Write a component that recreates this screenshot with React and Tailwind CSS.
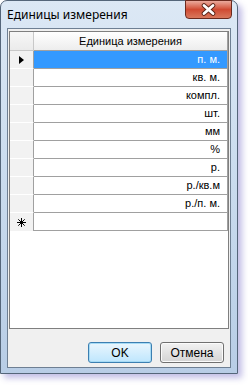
const units = ["п. м.", "кв. м.", "компл.", "шт.", "мм", "%", "р.", "р./кв.м", "р./п. м."];

const CloseX = () => (
  <svg width="15" height="13" viewBox="0 0 15 13">
    <path d="M3 2.5 L12 10.5 M12 2.5 L3 10.5" stroke="#5a2418" strokeWidth="4.6" strokeLinecap="round" />
    <path d="M3 2.5 L12 10.5 M12 2.5 L3 10.5" stroke="#ffffff" strokeWidth="2.8" strokeLinecap="round" />
  </svg>
);

const Star = () => (
  <svg width="9" height="9" viewBox="0 0 9 9">
    <path d="M4.5 0 V9 M0 4.5 H9 M1.3 1.3 L7.7 7.7 M7.7 1.3 L1.3 7.7" stroke="#000" strokeWidth="1" />
  </svg>
);

const Row = ({ label, selected }) => (
  <div className="flex h-[18px]">
    <div className="w-[24px] shrink-0 bg-[#f2f2f2] border-r border-[#a0a0a0] border-b border-b-white flex items-center justify-center">
      {selected && (
        <svg width="5" height="8" viewBox="0 0 5 8">
          <path d="M0 0 L5 4 L0 8 Z" fill="#000" />
        </svg>
      )}
    </div>
    <div
      className={`flex-1 flex items-center justify-end pr-[7px] border-b border-r border-[#a0a0a0] ${
        selected ? "bg-[#3399ff] text-white" : "bg-white text-black"
      }`}
    >
      {label}
    </div>
  </div>
);

const App = () => {
  return (
    <div className="w-[248px] h-[385px] bg-white" style={{ fontFamily: "'Liberation Sans', Arial, sans-serif" }}>
      <div className="relative w-[238px] h-[374px] rounded-t-[7px] border border-[#55667a] bg-gradient-to-b from-[#dce8f5] via-[#c9dbee] to-[#b8cde6] shadow-[4px_4px_6px_rgba(120,110,200,0.45)]">
        <div className="h-[27px] flex items-center pl-[6px] text-[12px] text-black" style={{ fontFamily: "'Noto Sans', 'Open Sans', sans-serif" }}>
          Единицы измерения
        </div>
        <div className="absolute top-[-1px] right-[5px] w-[47px] h-[19px] rounded-b-[4px] border border-[#6b2a1e] bg-gradient-to-b from-[#e9a99c] via-[#cf4a32] to-[#d8775c] flex items-center justify-center">
          <CloseX />
        </div>
        <div className="px-[6px]">
          <div className="h-[340px] border border-[#6e7f93] bg-[#f0f0f0]">
            <div className="mx-px mt-[2px] h-[298px] border border-[#7f7f7f] bg-white text-[11px]">
              <div className="flex h-[19px]">
                <div className="w-[24px] shrink-0 bg-gradient-to-b from-[#f7f7f7] to-[#ebebeb] border-r border-b border-[#c8c8c8]" />
                <div className="flex-1 flex items-center justify-center bg-gradient-to-b from-white to-[#ededed] border-b border-r border-[#a0a0a0] text-black">
                  Единица измерения
                </div>
              </div>
              {units.map((u, i) => (
                <Row key={u} label={u} selected={i === 0} />
              ))}
              <div className="flex h-[18px]">
                <div className="w-[24px] shrink-0 bg-[#f2f2f2] border-r border-[#a0a0a0] flex items-center justify-center">
                  <Star />
                </div>
                <div className="flex-1 border-b border-r border-[#a0a0a0] bg-white" />
              </div>
            </div>
            <div className="mt-[13px] flex justify-end gap-[8px] pr-[6px] text-[12px]">
              <button className="w-[64px] h-[21px] rounded-[3px] border border-[#3c7fb1] bg-gradient-to-b from-[#eaf6fd] to-[#bee6fd] text-black shadow-[inset_0_0_0_1px_#a6dbf5]">
                OK
              </button>
              <button className="w-[64px] h-[21px] rounded-[3px] border border-[#707070] bg-gradient-to-b from-[#f2f2f2] to-[#d4d4d4] text-black shadow-[inset_0_0_0_1px_#fbfbfb]">
                Отмена
              </button>
            </div>
          </div>
        </div>
      </div>
    </div>
  );
};

export default App;
